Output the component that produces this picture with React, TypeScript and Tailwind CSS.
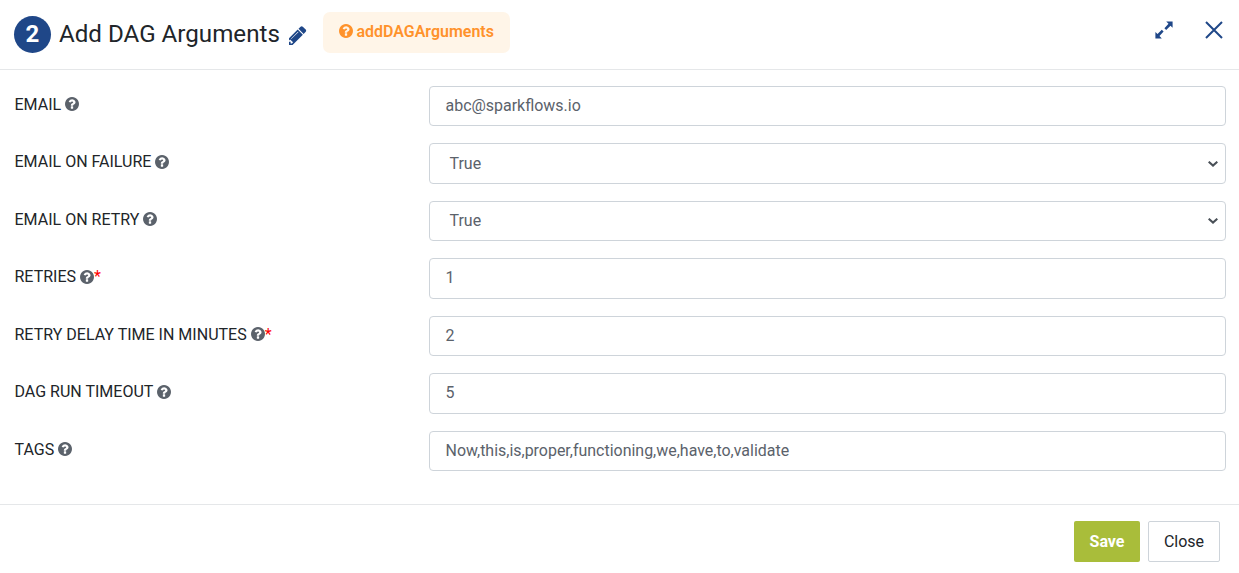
import React from "react";

function QuestionIcon({ className }: { className: string }) {
  return (
    <svg viewBox="128 128 1536 1536" fill="currentColor" className={className}>
      <path d="M1024 1376v-192q0-14-9-23t-23-9h-192q-14 0-23 9t-9 23v192q0 14 9 23t23 9h192q14 0 23-9t9-23zm256-672q0-88-55.5-163t-138.5-116-170-41q-243 0-371 213-15 24 8 42l132 100q7 6 19 6 16 0 25-12 53-68 86-92 34-24 86-24 48 0 85.5 26t37.5 59q0 38-20 61t-68 45q-63 28-115.5 86.5t-52.5 125.5v36q0 14 9 23t23 9h192q14 0 23-9t9-23q0-19 21.5-49.5t54.5-49.5q32-18 49-28.5t46-35 44.5-48 28-60.5 12.5-81zm384 192q0 209-103 385.5t-279.5 279.5-385.5 103-385.5-103-279.5-279.5-103-385.5 103-385.5 279.5-279.5 385.5-103 385.5 103 279.5 279.5 103 385.5z" />
    </svg>
  );
}

type Field = { label: string; value: string; select?: boolean; required?: boolean };

const fields: Field[] = [
  { label: "EMAIL", value: "abc@sparkflows.io" },
  { label: "EMAIL ON FAILURE", value: "True", select: true },
  { label: "EMAIL ON RETRY", value: "True", select: true },
  { label: "RETRIES", value: "1", required: true },
  { label: "RETRY DELAY TIME IN MINUTES", value: "2", required: true },
  { label: "DAG RUN TIMEOUT", value: "5" },
  { label: "TAGS", value: "Now,this,is,proper,functioning,we,have,to,validate" },
];

function FieldRow({ label, value, select, required }: Field) {
  return (
    <div className="flex h-[40.25px] items-start">
      <div className="flex w-[414.5px] shrink-0 items-center pt-[6.85px] text-[16.03px] leading-[24px] text-[#212529]">
        <span>{label}</span>
        <QuestionIcon className="-mt-[0.5px] ml-[4px] size-[14px] text-[#5b626b]" />
        {required && <span className="text-[#ff0000]">*</span>}
      </div>
      <div
        className={`flex h-full flex-1 items-center justify-between rounded-[4px] border border-[#ced4da] pr-[7px] text-[15.96px] text-[#5b626b] ${select ? "pt-[0.5px] pl-[19.5px]" : "pl-[15.5px]"}`}
      >
        <span>{value}</span>
        {select && (
          <svg viewBox="0 0 10 6" className="h-[6px] w-[10px]" fill="none" stroke="#495057" strokeWidth="2">
            <path d="M0.7 0.7L5 4.6L9.3 0.7" />
          </svg>
        )}
      </div>
    </div>
  );
}

export default function App() {
  return (
    <div className="flex h-[573px] w-[1239px] flex-col bg-white font-['Roboto',sans-serif]">
      <header className="flex h-[70px] shrink-0 items-start border-b border-[#e5e7e9] pl-[14px]">
        <div className="mt-[16px] flex size-[37px] items-center justify-center rounded-full bg-[#1f4788] pb-px text-[24px] leading-none font-bold text-white">
          2
        </div>
        <h1 className="mt-[18px] ml-[8px] w-[221px] text-[24.15px] leading-[32px] font-[450] whitespace-nowrap text-[#212529]">
          Add DAG Arguments
        </h1>
        <svg viewBox="128 128 1536 1536" className="mt-[25.5px] ml-[8.5px] size-[19px]" fill="#1f4788">
          <path d="M363 1536l91-91-235-235-91 91v107h128v128h107zm523-928q0-22-22-22-10 0-17 7l-542 542q-7 7-7 17 0 22 22 22 10 0 17-7l542-542q7-7 7-17zm-54-192l416 416-832 832h-416v-416zm683 96q0 53-37 90l-166 166-416-416 166-165q36-38 90-38 53 0 91 38l235 234q37 39 37 91z" />
        </svg>
        <div className="mt-[12px] ml-[15.5px] flex h-[41px] w-[187px] items-center rounded-[7px] bg-[#fff5e8] pl-[15.5px] text-[15.97px] font-[650] text-[#ff922b]">
          <QuestionIcon className="-mt-[3px] mr-[4px] size-[14px]" />
          <span className="-mt-px">addDAGArguments</span>
        </div>
        <div className="mt-[21px] mr-[16px] ml-auto flex gap-[32px]">
          <svg viewBox="0 0 18 18" className="size-[18px]" fill="#1f4788">
            <path d="M11.2 0.4H17.6V6.8L15.5 4.7L11.2 9L9.4 7.2L13.5 2.7ZM6.8 17.4H0.4V11L2.5 13.1L6.8 8.8L8.6 10.6L4.5 15.1Z" />
          </svg>
          <svg viewBox="0 0 18 18" className="size-[18px]" stroke="#1f4788" strokeWidth="2">
            <path d="M1 1L17 17M17 1L1 17" />
          </svg>
        </div>
      </header>
      <main className="flex h-[435px] shrink-0 flex-col gap-[17.25px] border-b border-[#e5e7e9] pt-[15.75px] pr-[13px] pl-[14.5px]">
        {fields.map((f) => (
          <FieldRow key={f.label} {...f} />
        ))}
      </main>
      <footer className="flex gap-[8px] pt-[16px] pr-[19px]">
        <button className="ml-auto h-[41px] w-[66px] rounded-[2px] bg-[#a9bd3a] pt-px text-[16px] font-bold text-white">Save</button>
        <button className="h-[41px] w-[72px] rounded-[2px] border border-[#ced4da] pt-px text-[16px] font-[450] text-[#212529]">
          Close
        </button>
      </footer>
    </div>
  );
}
